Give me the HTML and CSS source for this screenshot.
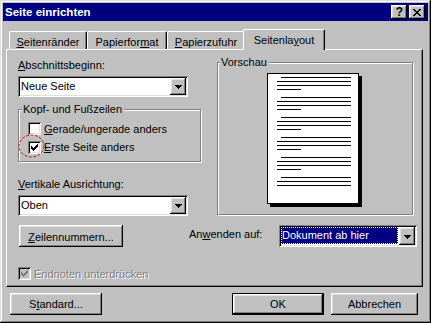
FILE: index.html
```html
<!DOCTYPE html>
<html lang="de">
<head>
<meta charset="utf-8">
<title>Seite einrichten</title>
<link rel="stylesheet" href="styles.css">
</head>
<body>
<div class="window">
  <div class="titlebar">
    <span class="title">Seite einrichten</span>
    <span class="tb-btn bevel help">?</span>
    <span class="tb-btn bevel close"><svg width="8" height="7" viewBox="0 0 8 7"><path d="M0 0h2v1H0zM6 0h2v1H6zM1 1h2v1H1zM5 1h2v1H5zM2 2h4v1H2zM3 3h2v1H3zM2 4h4v1H2zM1 5h2v1H1zM5 5h2v1H5zM0 6h2v1H0zM6 6h2v1H6z" fill="#000"/></svg></span>
  </div>
  <div class="dialog">
    <div class="tabs">
      <div class="tab t1"><u>S</u>eitenränder</div>
      <div class="tab t2">Papierfor<u>m</u>at</div>
      <div class="tab t3"><u>P</u>apierzufuhr</div>
      <div class="tab t4 active">Seitenla<u>y</u>out</div>
    </div>
    <div class="panel">
      <div class="row-a">
        <div class="col-left">
          <div class="label"><u>A</u>bschnittsbeginn:</div>
          <div class="combo c1">
            <span class="combo-text">Neue Seite</span>
            <span class="drop bevel"><svg width="7" height="4" viewBox="0 0 7 4"><path d="M0 0h7v1H0zM1 1h5v1H1zM2 2h3v1H2zM3 3h1v1H3z" fill="#000"/></svg></span>
          </div>
          <div class="group kopf">
            <div class="group-label gl-kopf">Kopf- und Fußzeilen</div>
            <div class="check-row r1">
              <span class="cb"></span>
              <span class="cb-label t-r1"><u>G</u>erade/ungerade anders</span>
            </div>
            <div class="check-row r2">
              <span class="cb marked">
                <svg width="7" height="7" viewBox="0 0 7 7"><path d="M0 2h1v3H0zM1 3h1v3H1zM2 4h1v3H2zM3 3h1v3H3zM4 2h1v3H4zM5 1h1v3H5zM6 0h1v3H6z" fill="#000"/></svg>
                <svg class="ring" width="27" height="24" viewBox="0 0 27 24"><ellipse cx="13.5" cy="12" rx="12.5" ry="11" fill="none" stroke="#e00000" stroke-width="1" stroke-dasharray="3 1.5"/></svg>
              </span>
              <span class="cb-label t-r2"><u>E</u>rste Seite anders</span>
            </div>
          </div>
          <div class="label lv"><u>V</u>ertikale Ausrichtung:</div>
          <div class="combo c2">
            <span class="combo-text">Oben</span>
            <span class="drop bevel"><svg width="7" height="4" viewBox="0 0 7 4"><path d="M0 0h7v1H0zM1 1h5v1H1zM2 2h3v1H2zM3 3h1v1H3z" fill="#000"/></svg></span>
          </div>
        </div>
        <div class="group preview">
          <div class="group-label gl-prev">Vorschau</div>
          <div class="page">
            <div class="para"><div class="ln ind"></div><div class="ln"></div><div class="ln"></div><div class="ln short"></div></div>
            <div class="para"><div class="ln ind"></div><div class="ln"></div><div class="ln"></div><div class="ln short"></div></div>
            <div class="para"><div class="ln ind"></div><div class="ln"></div><div class="ln"></div><div class="ln short"></div></div>
            <div class="para"><div class="ln ind"></div><div class="ln"></div><div class="ln"></div><div class="ln short"></div></div>
            <div class="para"><div class="ln ind"></div><div class="ln"></div><div class="ln"></div><div class="ln short"></div></div>
            <div class="para"><div class="ln ind"></div><div class="ln"></div><div class="ln"></div></div>
          </div>
        </div>
      </div>
      <div class="row-b">
        <div class="btn bevel zeilen"><u>Z</u>eilennummern...</div>
        <div class="label anw">An<u>w</u>enden auf:</div>
        <div class="combo c3">
          <span class="combo-text sel">Dokument ab hier</span>
          <span class="drop bevel"><svg width="7" height="4" viewBox="0 0 7 4"><path d="M0 0h7v1H0zM1 1h5v1H1zM2 2h3v1H2zM3 3h1v1H3z" fill="#000"/></svg></span>
        </div>
      </div>
      <div class="row-c">
        <span class="cb disabled"><svg width="7" height="7" viewBox="0 0 7 7"><path d="M0 2h1v3H0zM1 3h1v3H1zM2 4h1v3H2zM3 3h1v3H3zM4 2h1v3H4zM5 1h1v3H5zM6 0h1v3H6z" fill="#808080"/></svg></span>
        <span class="cb-label dis">Endnoten unterdrücken</span>
      </div>
    </div>
    <div class="buttons">
      <div class="btn bevel std">S<u>t</u>andard...</div>
      <div class="btn bevel ok">OK</div>
      <div class="btn bevel cancel">Abbrechen</div>
    </div>
  </div>
</div>
</body>
</html>
```

FILE: styles.css
```css
* {
  box-sizing: border-box;
  margin: 0;
  padding: 0;
}

html,
body {
  width: 431px;
  height: 323px;
  overflow: hidden;
}

body {
  background: #c0c0c0;
  font-family: "Liberation Sans", Arial, sans-serif;
  font-size: 11px;
  line-height: 13px;
  color: #000;
}

u {
  text-decoration: underline;
  text-underline-offset: 1px;
}

svg {
  display: block;
}

.bevel {
  background: #c0c0c0;
  box-shadow: inset -1px -1px #000, inset 1px 1px #fff, inset -2px -2px #808080, inset 2px 2px #dfdfdf;
}

.window {
  width: 431px;
  height: 323px;
  padding: 3px;
  background: #c0c0c0;
  box-shadow: inset -1px -1px #000, inset 1px 1px #dfdfdf, inset -2px -2px #808080, inset 2px 2px #fff;
}

/* title bar */
.titlebar {
  height: 18px;
  background: #000080;
  color: #fff;
  display: flex;
  align-items: center;
  padding: 0 3px 0 2px;
}

.title {
  flex: 1;
  font-weight: bold;
  font-size: 11.5px;
  line-height: 18px;
  white-space: nowrap;
}

.tb-btn {
  width: 16px;
  height: 14px;
  display: flex;
  align-items: center;
  justify-content: center;
  color: #000;
}

.help {
  margin-right: 2px;
  font-weight: bold;
  font-size: 12px;
  line-height: 14px;
  padding-left: 1px;
}

.close svg {
  margin-left: 0;
}

/* dialog body */
.dialog {
  padding: 8px 5px 0 3px;
}

.tabs {
  display: flex;
  align-items: flex-end;
  height: 20px;
  padding-left: 3px;
}

.tab {
  height: 18px;
  padding-top: 4px;
  text-align: center;
  white-space: nowrap;
  background: #c0c0c0;
  border-top: 1px solid #fff;
  border-left: 1px solid #fff;
  border-right: 1px solid #000;
  border-radius: 2px 2px 0 0;
  box-shadow: inset -1px 0 #808080;
}

.t1 { width: 78px; }
.t2 { width: 80px; }
.t3 { width: 78px; }

.tab.active {
  width: 82px;
  height: 21px;
  margin-left: -2px;
  margin-bottom: -1px;
  position: relative;
  z-index: 1;
}

.panel {
  width: 417px;
  height: 238px;
  border-top: 1px solid #fff;
  border-left: 1px solid #fff;
  border-right: 1px solid #000;
  border-bottom: 1px solid #000;
  box-shadow: inset -1px -1px #808080;
  padding: 9px 5px 0 11px;
}

.row-a {
  display: flex;
  align-items: flex-start;
  gap: 16px;
}

.col-left {
  width: 183px;
}

.label {
  white-space: nowrap;
}

/* combo boxes */
.combo {
  display: flex;
  background: #fff;
  padding: 2px;
  box-shadow: inset 1px 1px #808080, inset -1px -1px #fff, inset 2px 2px #000, inset -2px -2px #dfdfdf;
}

.c1,
.c2 {
  width: 170px;
  height: 21px;
  margin-top: 4px;
}

.combo-text {
  flex: 1;
  padding-left: 1px;
  line-height: 17px;
  white-space: nowrap;
}

.drop {
  width: 16px;
  height: 17px;
  display: flex;
  align-items: center;
  justify-content: center;
  padding-top: 1px;
}

.c3 {
  width: 138px;
  height: 22px;
  margin-left: auto;
}

.c3 .drop {
  height: 18px;
}

.combo-text.sel {
  margin: 0 1px 1px 0;
  background: #000080;
  color: #fff;
  outline: 1px dotted #ffffc0;
  outline-offset: -1px;
}

/* group boxes */
.group {
  border: 1px solid #808080;
  box-shadow: inset 1px 1px #fff, 1px 1px #fff;
}

.group-label {
  width: max-content;
  background: #c0c0c0;
  margin-top: -7px;
  padding: 0 2px 0 1px;
  white-space: nowrap;
}

.gl-kopf { margin-left: 3px; }
.gl-prev { margin-left: 2px; }

.kopf {
  width: 183px;
  height: 53px;
  margin-top: 12px;
}

.check-row {
  display: flex;
  align-items: flex-start;
  height: 19px;
  padding-left: 9px;
}

.r1 { margin-top: 3px; }

.check-row .cb {
  margin-top: 3px;
}

.cb {
  flex: none;
  width: 13px;
  height: 13px;
  padding: 3px;
  background: #fff;
  box-shadow: inset 1px 1px #808080, inset -1px -1px #fff, inset 2px 2px #000, inset -2px -2px #dfdfdf;
}

.cb.marked {
  position: relative;
}

.ring {
  position: absolute;
  left: -10px;
  top: -7px;
}

.cb.disabled {
  background: #c0c0c0;
}

.cb-label {
  margin-left: 3px;
  white-space: nowrap;
}

.t-r1 { padding-top: 4px; }
.t-r2 { padding-top: 3px; }

.lv {
  margin-top: 16px;
}

/* preview */
.preview {
  width: 196px;
  height: 153px;
  margin-top: 3px;
}

.page {
  width: 92px;
  height: 131px;
  margin: 4px 0 0 49px;
  background: #fff;
  border: 1px solid #000;
  box-shadow: 3px 3px 0 #000;
  padding: 3px 0 0 9px;
}

.para + .para {
  margin-top: 7px;
}

.ln {
  width: 74px;
  height: 1px;
  background: #000;
  margin-top: 3px;
}

.ln:first-child {
  margin-top: 0;
}

.ln.ind {
  width: 70px;
  margin-left: 4px;
}

.ln.short {
  width: 24px;
}

/* row b */
.row-b {
  display: flex;
  align-items: flex-start;
  margin-top: 9px;
}

.btn {
  height: 22px;
  display: flex;
  align-items: center;
  justify-content: center;
  padding-top: 1px;
  white-space: nowrap;
}

.zeilen {
  width: 104px;
  margin-left: 1px;
  padding-top: 2px;
}

.anw {
  margin-left: 66px;
  margin-top: 3px;
}

/* row c */
.row-c {
  display: flex;
  align-items: flex-start;
  margin-top: 20px;
}

.dis {
  padding-top: 1px;
  color: #808080;
  text-shadow: 1px 1px 0 #fff;
}

/* bottom buttons */
.buttons {
  display: flex;
  margin-top: 6px;
  padding: 0 5px 0 4px;
}

.std {
  width: 92px;
}

.ok {
  width: 92px;
  margin-left: auto;
  border: 1px solid #000;
}

.cancel {
  width: 87px;
  margin-left: 7px;
}
```
